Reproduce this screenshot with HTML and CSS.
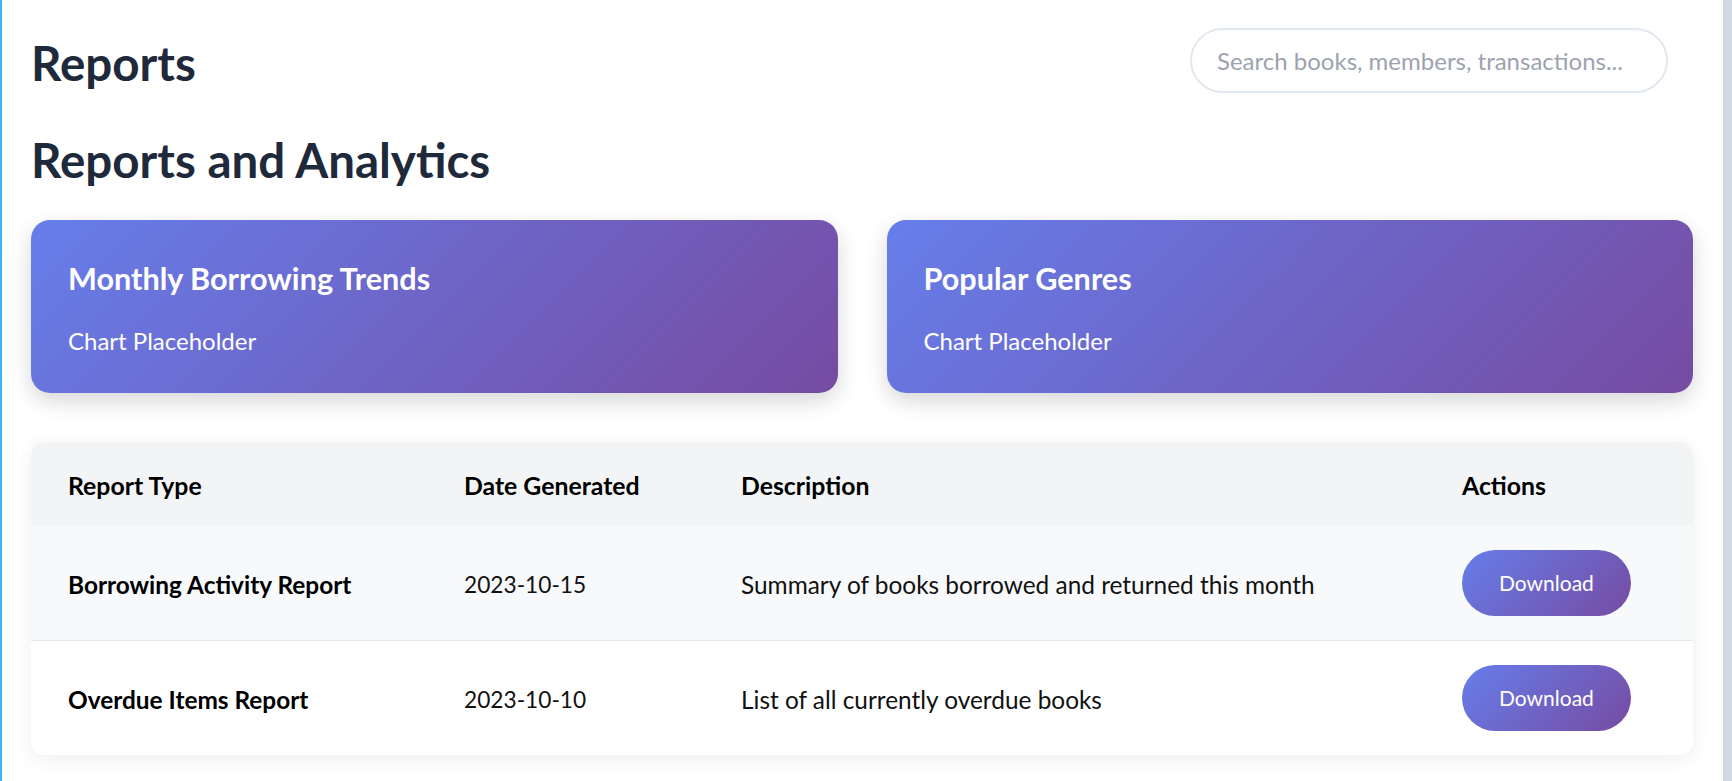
FILE: index.html
```html
<!DOCTYPE html>
<html lang="en">
<head>
<meta charset="utf-8">
<title>Reports</title>
<link rel="stylesheet" href="styles.css">
</head>
<body>
<div class="app">
  <div class="edge"></div>
  <main class="main">
    <header class="topbar">
      <h1 class="page-title">Reports</h1>
      <input class="search" type="text" placeholder="Search books, members, transactions...">
    </header>
    <section class="reports">
      <h2 class="section-title">Reports and Analytics</h2>
      <div class="charts">
        <div class="chart-card">
          <h3 class="chart-title">Monthly Borrowing Trends</h3>
          <p class="chart-text">Chart Placeholder</p>
        </div>
        <div class="chart-card">
          <h3 class="chart-title">Popular Genres</h3>
          <p class="chart-text">Chart Placeholder</p>
        </div>
      </div>
      <div class="table-card">
        <table class="report-table">
          <colgroup>
            <col class="c-type">
            <col class="c-date">
            <col class="c-desc">
            <col class="c-act">
          </colgroup>
          <thead>
            <tr>
              <th>Report Type</th>
              <th>Date Generated</th>
              <th>Description</th>
              <th>Actions</th>
            </tr>
          </thead>
          <tbody>
            <tr class="row-alt">
              <td class="name">Borrowing Activity Report</td>
              <td class="date">2023-10-15</td>
              <td>Summary of books borrowed and returned this month</td>
              <td class="action"><button class="btn">Download</button></td>
            </tr>
            <tr>
              <td class="name">Overdue Items Report</td>
              <td class="date">2023-10-10</td>
              <td>List of all currently overdue books</td>
              <td class="action"><button class="btn">Download</button></td>
            </tr>
          </tbody>
        </table>
      </div>
    </section>
  </main>
  <div class="scrollbar"></div>
</div>
</body>
</html>
```
FILE: styles.css
```css
* { box-sizing: border-box; }

html, body {
  margin: 0;
  padding: 0;
  background: #ffffff;
  font-family: "Lato", "Open Sans", sans-serif;
  color: #111;
}

.app {
  display: flex;
  min-height: 781px;
}

.edge {
  width: 2px;
  flex: 0 0 2px;
  background: #3fb6f4;
}

.scrollbar {
  width: 9px;
  flex: 0 0 9px;
  background: #cfd8e3;
}

.main {
  flex: 1;
  padding: 28px 30px 0 29px;
}

.topbar {
  display: flex;
  align-items: center;
  justify-content: space-between;
}

.page-title {
  margin: 5px 0 0;
  font-size: 47.5px;
  line-height: 54px;
  font-weight: 700;
  color: #1e293b;
}

.search {
  width: 478px;
  height: 65px;
  margin-right: 25px;
  padding: 0 25px;
  border: 2px solid #e2e8f0;
  border-radius: 33px;
  background: #fff;
  font-family: "Lato", "Open Sans", sans-serif;
  font-size: 24px;
  color: #374151;
  outline: none;
}

.search::placeholder {
  color: #9ca3af;
}

.section-title {
  margin: 40px 0 33px;
  font-size: 47.5px;
  line-height: 54px;
  font-weight: 700;
  color: #1e293b;
}

.charts {
  display: grid;
  grid-template-columns: 1fr 1fr;
  gap: 49px;
  margin-bottom: 49px;
}

.chart-card {
  height: 173px;
  padding: 40px 37px 0;
  border-radius: 19px;
  background: linear-gradient(135deg, #667eea 0%, #764ba2 100%);
  color: #fff;
  box-shadow: 0 8px 22px rgba(0, 0, 0, 0.16);
}

.chart-title {
  margin: 0 0 29px;
  font-size: 30.6px;
  line-height: 37px;
  font-weight: 700;
}

.chart-text {
  margin: 0;
  font-size: 24px;
  line-height: 30px;
}

.table-card {
  border-radius: 13px;
  overflow: hidden;
  background: #fff;
  box-shadow: 0 4px 20px rgba(0, 0, 0, 0.07);
}

.report-table {
  width: 100%;
  border-collapse: collapse;
  table-layout: fixed;
  font-size: 24.4px;
}

.c-type { width: 396px; }
.c-date { width: 277px; }
.c-desc { width: 721px; }
.c-act { width: 268px; }

.report-table th {
  text-align: left;
  padding: 27px 37px 23px;
  line-height: 34px;
  font-size: 24.8px;
  font-weight: 700;
  color: #000;
  background: #f3f4f6;
}

.report-table td {
  padding: 26px 37px 22px;
  line-height: 34px;
  vertical-align: middle;
  color: #111;
  white-space: nowrap;
}

.report-table td.action {
  padding: 24px 37px;
}

.report-table td.date {
  font-size: 22.7px;
}

.report-table tbody tr + tr td {
  border-top: 1px solid #e5e7eb;
}

.row-alt td {
  background: #f8f9fb;
}

.report-table td.name {
  font-weight: 700;
  color: #000;
}

.btn {
  display: block;
  height: 66px;
  padding: 0 37px;
  border: none;
  border-radius: 33px;
  background: linear-gradient(135deg, #667eea 0%, #764ba2 100%);
  color: #fff;
  font-family: "Lato", "Open Sans", sans-serif;
  font-size: 21px;
  line-height: 28px;
}
```
